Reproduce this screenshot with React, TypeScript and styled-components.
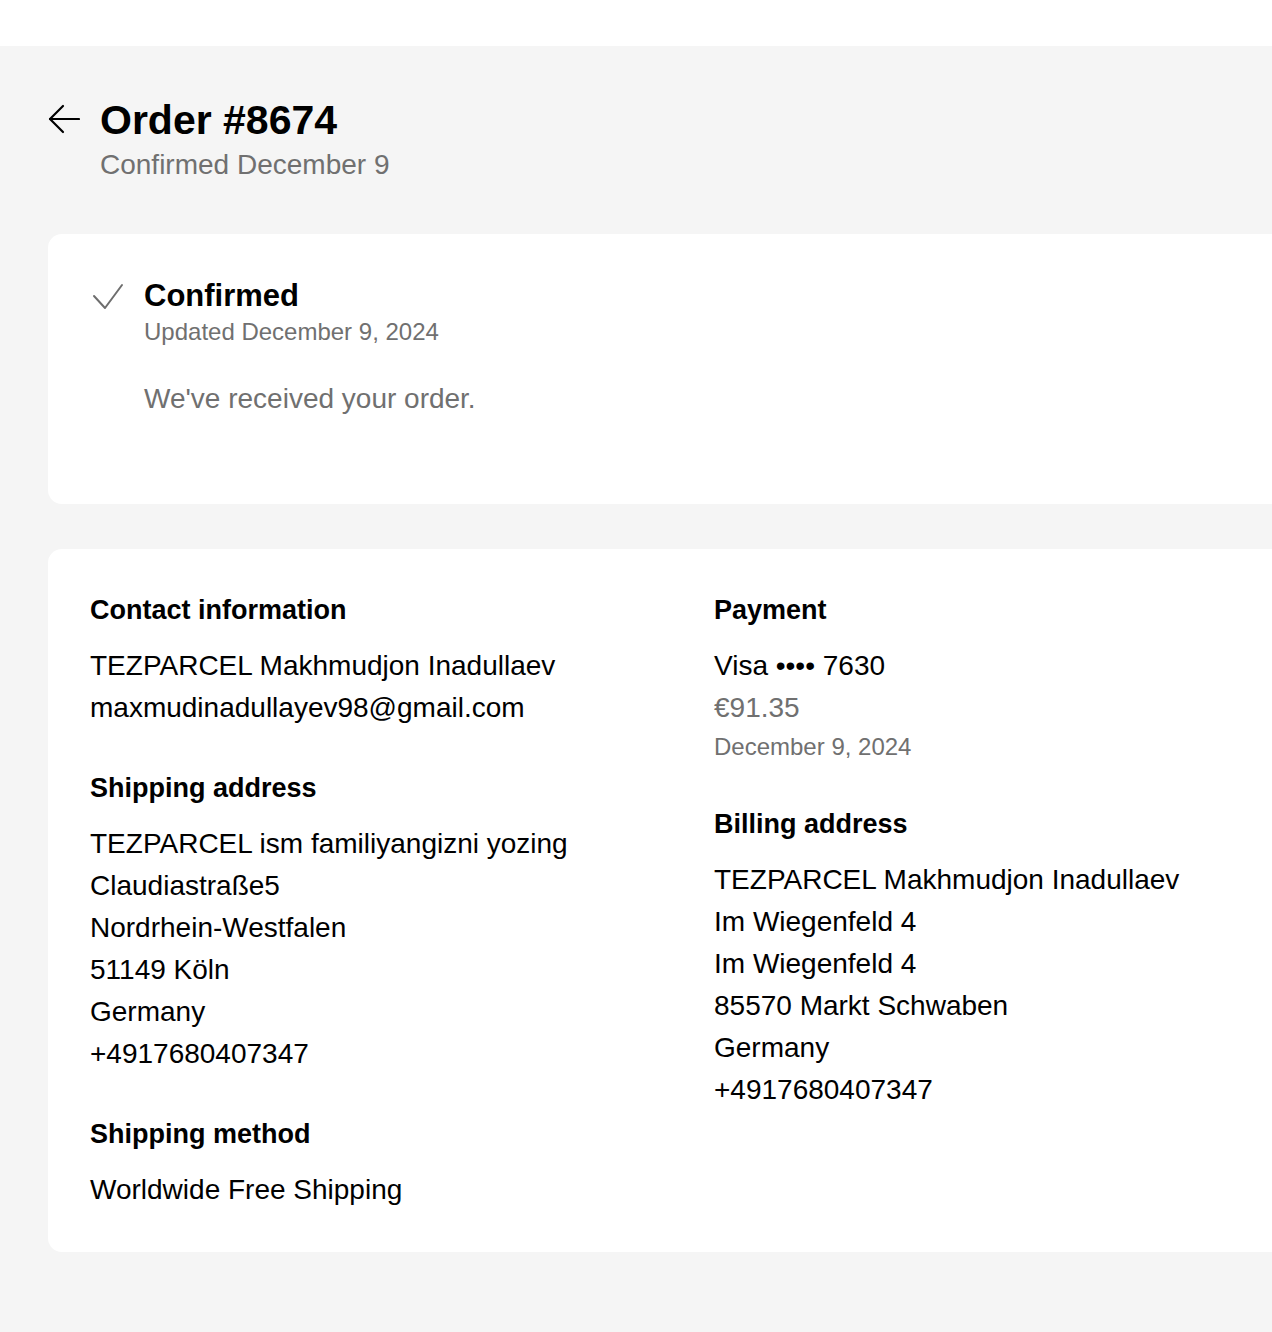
import React from "react";
import styled, { createGlobalStyle } from "styled-components";

const Global = createGlobalStyle`
  html, body {
    margin: 0;
    padding: 0;
    overflow-x: hidden;
    background: #ffffff;
    font-family: "Liberation Sans", Arial, Helvetica, sans-serif;
    color: #000000;
  }
  * { box-sizing: border-box; }
`;

const TopBar = styled.div`
  height: 46px;
  background: #ffffff;
`;

const Main = styled.main`
  background: #f5f5f5;
  min-height: calc(100vh - 46px);
  padding: 50px 0 80px 48px;
  width: 1320px;
  display: flex;
  flex-direction: column;
  gap: 45px;
`;

const Header = styled.header`
  display: grid;
  grid-template-columns: 32px auto;
  column-gap: 20px;
  align-items: start;
  margin-bottom: 3px;
`;

const BackButton = styled.button`
  border: none;
  background: none;
  padding: 0;
  margin-top: 8px;
  width: 32px;
  height: 30px;
  color: #000;
  cursor: pointer;
  display: flex;
`;

const TitleBlock = styled.div`
  display: flex;
  flex-direction: column;
`;

const Title = styled.h1`
  margin: 0;
  font-size: 41px;
  line-height: 48px;
  font-weight: 700;
`;

const Subtitle = styled.div`
  font-size: 28px;
  line-height: 42px;
  color: #707070;
`;

const Card = styled.section<{ $pad: string }>`
  background: #ffffff;
  border-radius: 14px;
  width: 1260px;
  padding: ${(p) => p.$pad};
`;

const StatusRow = styled.div`
  display: grid;
  grid-template-columns: 32px auto;
  column-gap: 20px;
`;

const CheckIcon = styled.svg`
  margin-top: 5px;
  color: #6e6e6e;
`;

const StatusBody = styled.div`
  display: flex;
  flex-direction: column;
`;

const StatusTitle = styled.h2`
  margin: 0;
  font-size: 31px;
  line-height: 37px;
  font-weight: 700;
`;

const Small = styled.div`
  font-size: 24px;
  line-height: 36px;
  color: #707070;
`;

const Note = styled.p`
  margin: 28px 0 0;
  font-size: 28px;
  line-height: 42px;
  color: #707070;
`;

const Columns = styled.div`
  display: grid;
  grid-template-columns: 576px 576px;
  column-gap: 48px;
  align-items: start;
`;

const Column = styled.div`
  display: flex;
  flex-direction: column;
  gap: 38px;
`;

const Section = styled.div`
  display: flex;
  flex-direction: column;
`;

const SectionTitle = styled.h3`
  margin: 0 0 14px;
  font-size: 27px;
  line-height: 42px;
  font-weight: 700;
`;

const Line = styled.div<{ $muted?: boolean }>`
  font-size: 28px;
  line-height: 42px;
  color: ${(p) => (p.$muted ? "#707070" : "#000000")};
`;

export default function App() {
  return (
    <>
      <Global />
      <TopBar />
      <Main>
        <Header>
          <BackButton aria-label="Back">
            <svg width="32" height="30" viewBox="0 0 32 30" fill="none" stroke="currentColor" strokeWidth="2.2" strokeLinecap="round" strokeLinejoin="round">
              <path d="M31 15 H2" />
              <path d="M15 2 L2 15 L15 28" />
            </svg>
          </BackButton>
          <TitleBlock>
            <Title>Order #8674</Title>
            <Subtitle>Confirmed December 9</Subtitle>
          </TitleBlock>
        </Header>

        <Card $pad="43px 44px 84px">
          <StatusRow>
            <CheckIcon width="32" height="30" viewBox="0 0 32 30" fill="none" stroke="currentColor" strokeWidth="2" strokeLinecap="round" strokeLinejoin="round">
              <path d="M2 14 L13 26 L30 3" />
            </CheckIcon>
            <StatusBody>
              <StatusTitle>Confirmed</StatusTitle>
              <Small>Updated December 9, 2024</Small>
              <Note>We've received your order.</Note>
            </StatusBody>
          </StatusRow>
        </Card>

        <Card $pad="40px 42px 41px">
          <Columns>
            <Column>
              <Section>
                <SectionTitle>Contact information</SectionTitle>
                <Line>TEZPARCEL Makhmudjon Inadullaev</Line>
                <Line>maxmudinadullayev98@gmail.com</Line>
              </Section>
              <Section>
                <SectionTitle>Shipping address</SectionTitle>
                <Line>TEZPARCEL ism familiyangizni yozing</Line>
                <Line>Claudiastraße5</Line>
                <Line>Nordrhein-Westfalen</Line>
                <Line>51149 Köln</Line>
                <Line>Germany</Line>
                <Line>+4917680407347</Line>
              </Section>
              <Section>
                <SectionTitle>Shipping method</SectionTitle>
                <Line>Worldwide Free Shipping</Line>
              </Section>
            </Column>
            <Column>
              <Section>
                <SectionTitle>Payment</SectionTitle>
                <Line>Visa •••• 7630</Line>
                <Line $muted>€91.35</Line>
                <Small>December 9, 2024</Small>
              </Section>
              <Section>
                <SectionTitle>Billing address</SectionTitle>
                <Line>TEZPARCEL Makhmudjon Inadullaev</Line>
                <Line>Im Wiegenfeld 4</Line>
                <Line>Im Wiegenfeld 4</Line>
                <Line>85570 Markt Schwaben</Line>
                <Line>Germany</Line>
                <Line>+4917680407347</Line>
              </Section>
            </Column>
          </Columns>
        </Card>
      </Main>
    </>
  );
}
